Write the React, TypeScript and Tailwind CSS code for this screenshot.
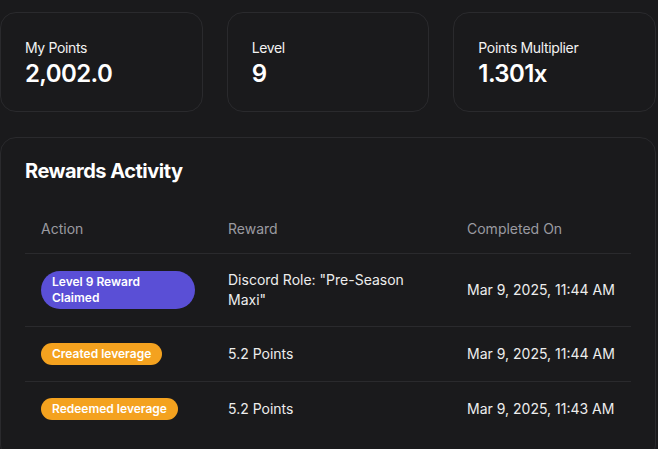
import React from "react"

const stats = [
  { label: "My Points", value: "2,002.0" },
  { label: "Level", value: "9" },
  { label: "Points Multiplier", value: "1.301x" },
]

type Row = { action: string; tone: "purple" | "orange"; reward: string; date: string }

const rows: Row[] = [
  { action: "Level 9 Reward Claimed", tone: "purple", reward: 'Discord Role: "Pre-Season Maxi"', date: "Mar 9, 2025, 11:44 AM" },
  { action: "Created leverage", tone: "orange", reward: "5.2 Points", date: "Mar 9, 2025, 11:44 AM" },
  { action: "Redeemed leverage", tone: "orange", reward: "5.2 Points", date: "Mar 9, 2025, 11:43 AM" },
]

function Badge({ text, tone }: { text: string; tone: Row["tone"] }) {
  return (
    <span
      className={
        tone === "purple"
          ? "inline-block w-[154px] rounded-full bg-[#5a4fd6] px-[11px] py-[3px] text-[12px] leading-4 font-semibold text-white"
          : "inline-block rounded-full bg-[#f4a21f] px-[11px] py-[3px] text-[12px] leading-4 font-semibold text-white"
      }
    >
      {text}
    </span>
  )
}

export default function App() {
  return (
    <div className="min-h-screen bg-[#1a1a1c] pt-3 pr-[2px] text-white font-['Inter',sans-serif]">
      {/* stat cards */}
      <div className="grid grid-cols-3 gap-6">
        {stats.map((s) => (
          <div key={s.label} className="h-[100px] rounded-2xl border border-[#2a2a2d] bg-[#1a1a1c] px-6 pt-[25px]">
            <p className="text-sm leading-5 tracking-tight text-[#f2f2f2]">{s.label}</p>
            <p className="mt-[2px] text-2xl leading-7 font-semibold tracking-tight text-white">{s.value}</p>
          </div>
        ))}
      </div>

      {/* rewards activity */}
      <div className="mt-[25px] rounded-2xl border border-[#2a2a2d] bg-[#1a1a1c] px-6 pt-[19px] pb-6">
        <h2 className="text-xl leading-7 font-bold tracking-tight text-white">Rewards Activity</h2>
        <table className="mt-5 w-full table-fixed text-sm">
          <colgroup>
            <col className="w-[187px]" />
            <col className="w-[239px]" />
            <col />
          </colgroup>
          <thead>
            <tr className="border-b border-[#2a2a2d]">
              <th className="h-12 px-4 text-left font-normal text-[#9a9aa1]">Action</th>
              <th className="h-12 px-4 text-left font-normal text-[#9a9aa1]">Reward</th>
              <th className="h-12 px-4 text-left font-normal text-[#9a9aa1]">Completed On</th>
            </tr>
          </thead>
          <tbody>
            {rows.map((r, i) => (
              <tr key={i} className={i < rows.length - 1 ? "border-b border-[#2a2a2d]" : ""}>
                <td className="px-4 py-4 align-middle">
                  <Badge text={r.action} tone={r.tone} />
                </td>
                <td className="px-4 py-4 align-middle leading-5 text-[#ededed]">{r.reward}</td>
                <td className="px-4 py-4 align-middle leading-5 text-[#ededed]">{r.date}</td>
              </tr>
            ))}
          </tbody>
        </table>
      </div>
    </div>
  )
}
